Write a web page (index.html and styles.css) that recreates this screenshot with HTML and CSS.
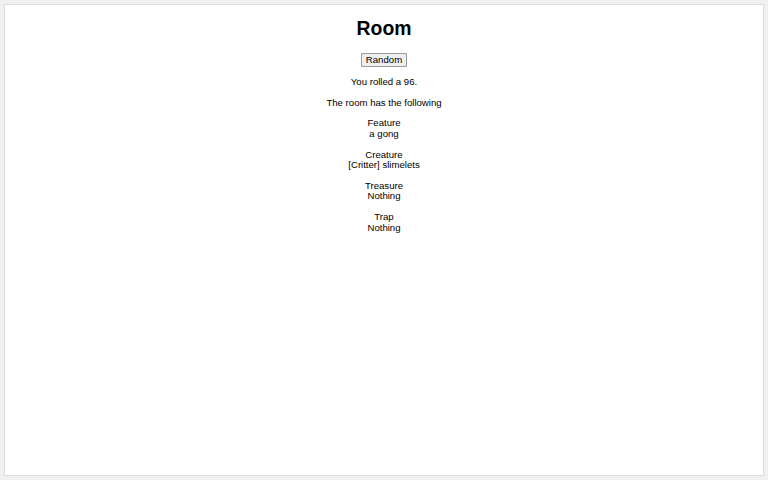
FILE: index.html
```html
<!DOCTYPE html>
<html lang="en">

<head>
  <meta charset="UTF-8">
  <meta name="viewport" content="width=device-width, initial-scale=1.0">
  <title>Room</title>
  <link rel="stylesheet" href="styles.css">
</head>

<body>
  <div class="page">
    <h1>Room</h1>
    <button class="roll-btn">Random</button>
    <p>You rolled a 96.</p>
    <p>The room has the following</p>

    <div class="entry">
      <div>Feature</div>
      <div>a gong</div>
    </div>
    <div class="entry">
      <div>Creature</div>
      <div>[Critter] slimelets</div>
    </div>
    <div class="entry">
      <div>Treasure</div>
      <div>Nothing</div>
    </div>
    <div class="entry">
      <div>Trap</div>
      <div>Nothing</div>
    </div>
  </div>
</body>

</html>
```

FILE: styles.css
```css
html,
body {
  height: 100%;
}

body {
  font-family: "Liberation Sans", Arial, sans-serif;
  font-size: 9.6px;
  line-height: 10.5px;
  margin: 0;
  padding: 4px;
  box-sizing: border-box;
  background: #f0f0f0;
}

.page {
  height: 100%;
  box-sizing: border-box;
  background: white;
  border: 1px solid #dcdcdc;
  text-align: center;
  padding-top: 1px;
}

h1 {
  font-size: 19.4px;
  line-height: 22px;
  margin: 11px 0 14px;
}

.roll-btn {
  font-family: inherit;
  font-size: 9.6px;
  line-height: 10px;
  padding: 1px 4px;
  margin: 0;
  background: #efefef;
  border: 1px solid #999;
  border-radius: 1px;
  color: black;
}

p {
  margin: 10px 0;
}

.entry {
  margin: 10.3px 0;
}
```
